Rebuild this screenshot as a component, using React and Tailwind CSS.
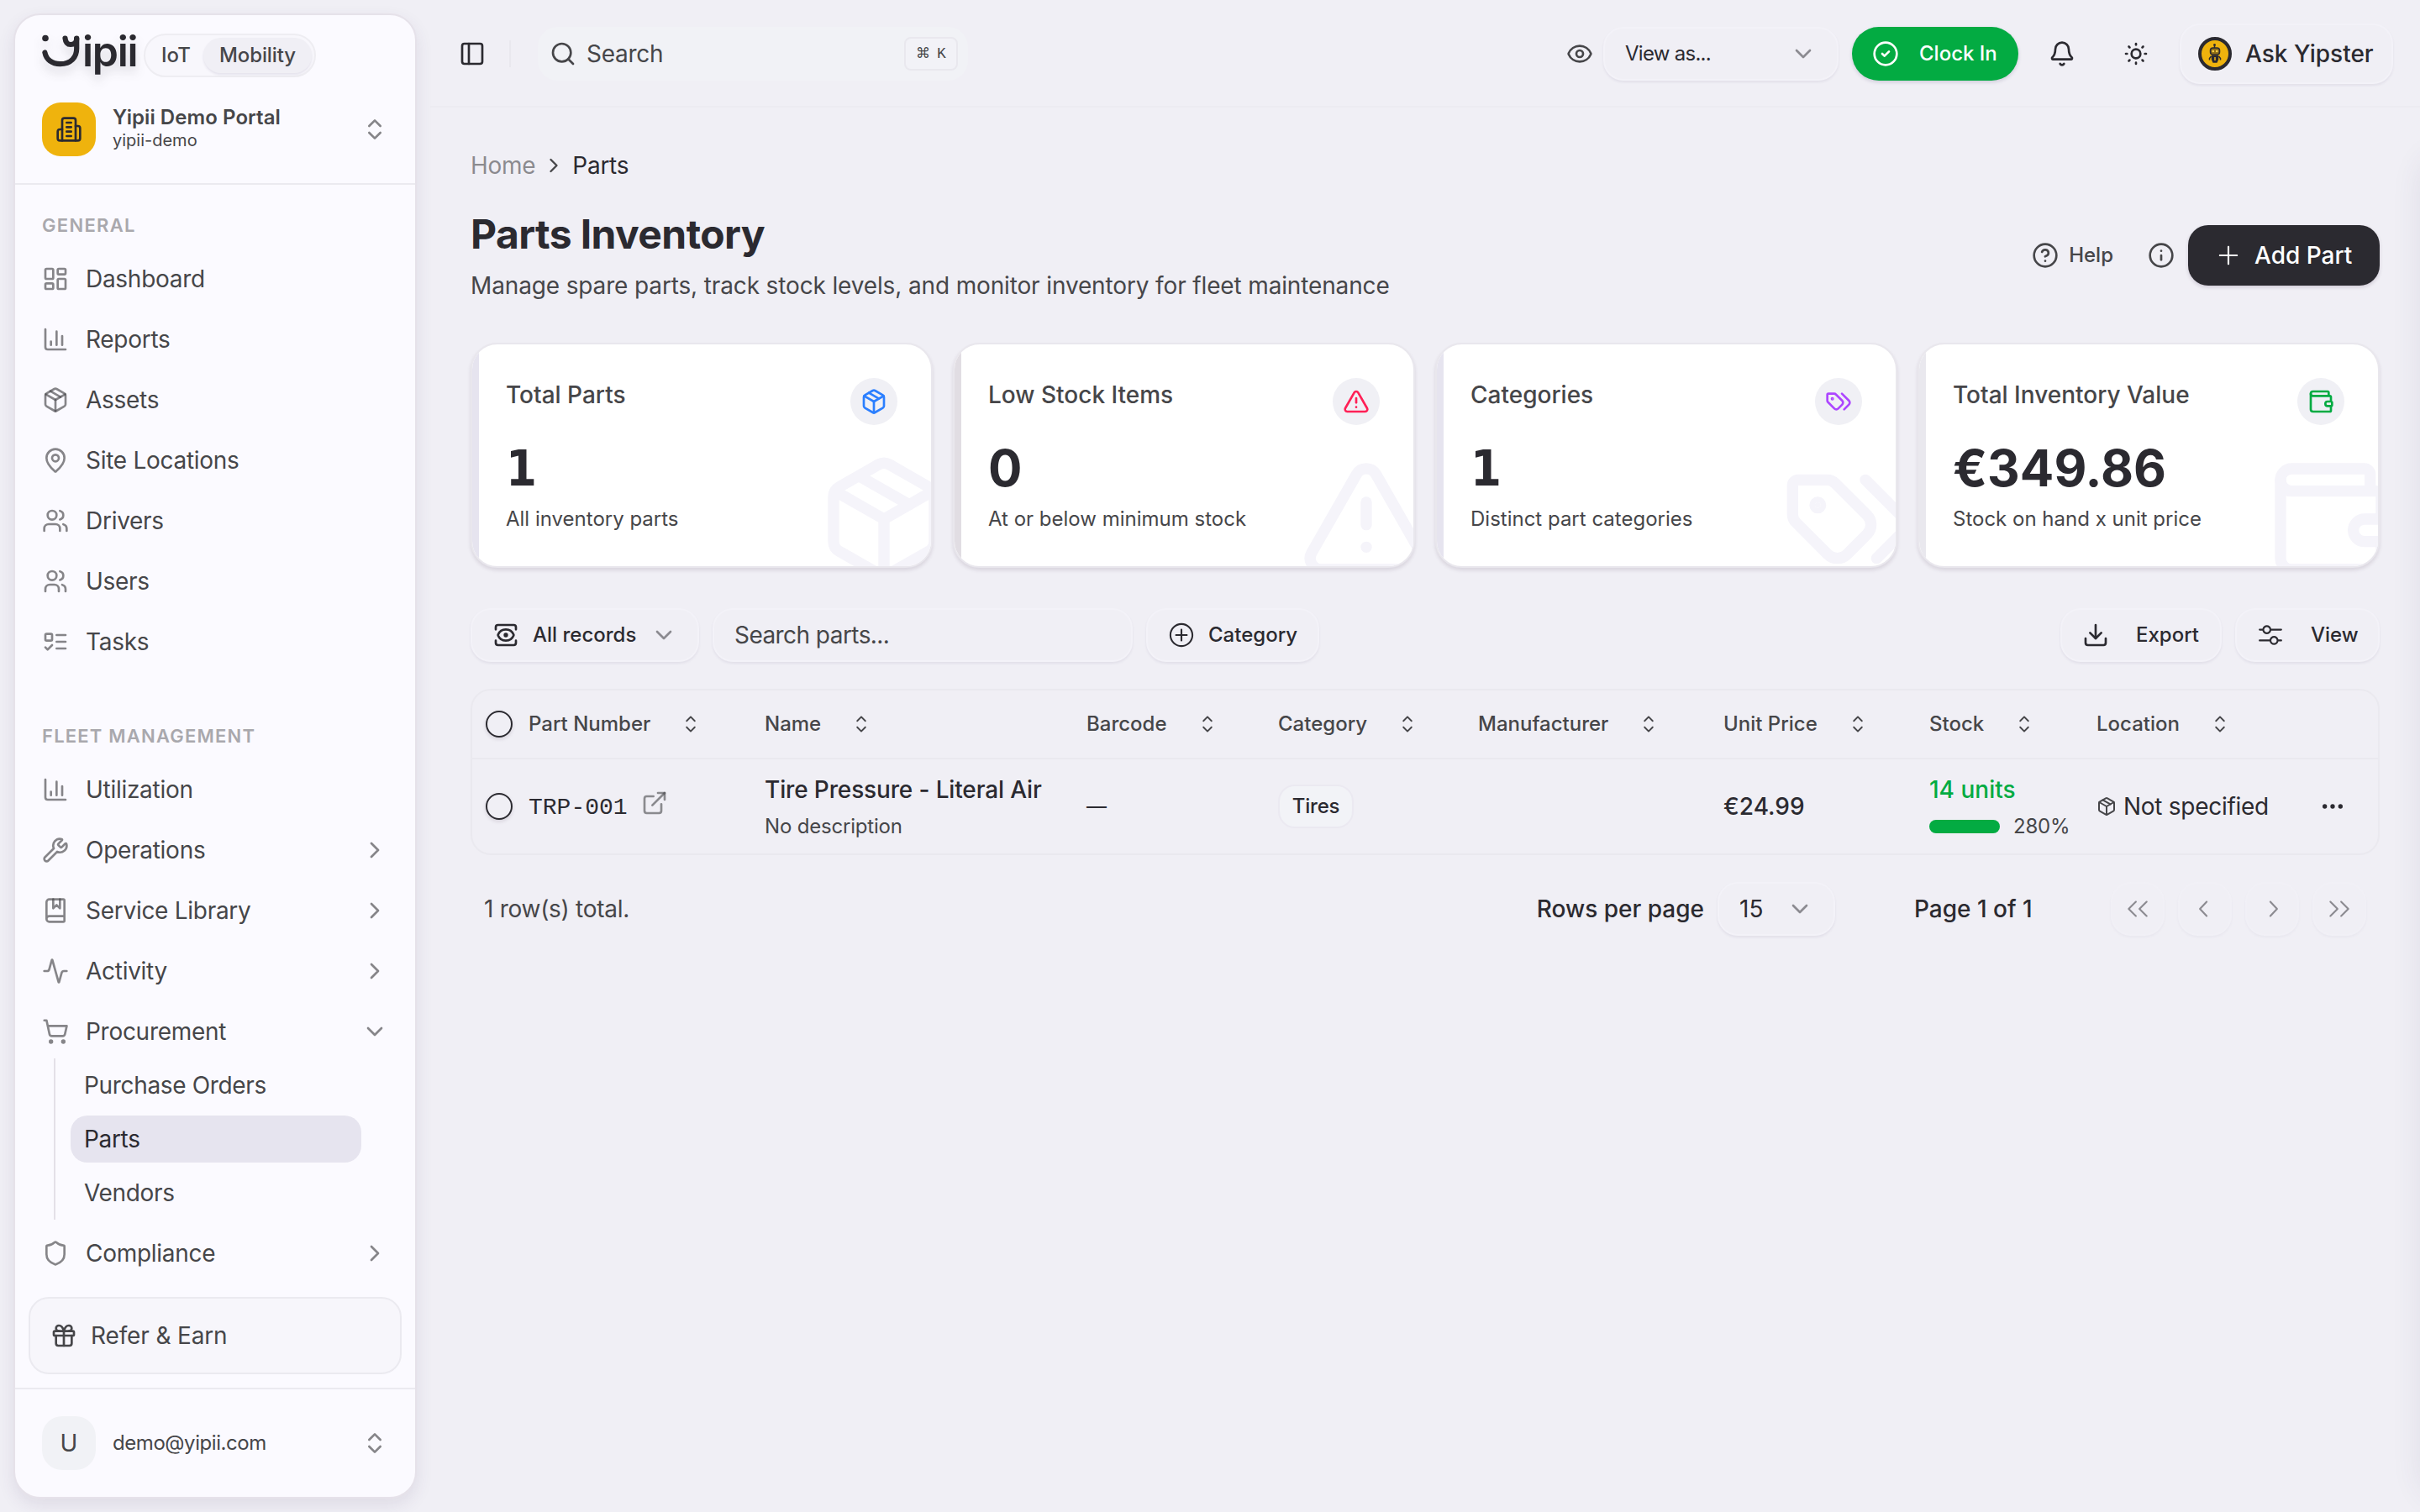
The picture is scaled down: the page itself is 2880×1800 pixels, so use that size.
import React from "react";
import {
  Activity,
  Bell,
  BookMarked,
  ChartColumn,
  ChevronDown,
  ChevronRight,
  ChevronsUpDown,
  CircleCheck,
  CircleQuestionMark,
  Download,
  Ellipsis,
  ExternalLink,
  Eye,
  Gift,
  Info,
  LayoutDashboard,
  MapPin,
  Package,
  PanelLeft,
  Search,
  Shield,
  ShoppingCart,
  SunMedium,
  TriangleAlert,
  Users,
  View,
  Wallet,
  Wrench,
} from "lucide-react";
import {
  RxCaretSort,
  RxChevronLeft,
  RxChevronRight,
  RxDoubleArrowLeft,
  RxDoubleArrowRight,
  RxMixerHorizontal,
  RxPlus,
  RxPlusCircled,
} from "react-icons/rx";

function Svg({ className, children }) {
  return (
    <svg
      viewBox="0 0 24 24"
      fill="none"
      stroke="currentColor"
      strokeWidth="2"
      strokeLinecap="round"
      strokeLinejoin="round"
      className={className}
    >
      {children}
    </svg>
  );
}

function TeamIcon({ className }) {
  return (
    <Svg className={className}>
      <circle cx="9" cy="7" r="4" />
      <path d="M3 21v-2a4 4 0 0 1 4-4h4a4 4 0 0 1 4 4v2" />
      <path d="M16 3.13a4 4 0 0 1 0 7.75" />
      <path d="M21 21v-2a4 4 0 0 0-3-3.85" />
    </Svg>
  );
}

function TodoIcon({ className }) {
  return (
    <Svg className={className}>
      <rect x="3" y="5" width="6" height="6" rx="1" />
      <path d="m3 17 2 2 4-4" />
      <path d="M13 6h8" />
      <path d="M13 12h8" />
      <path d="M13 18h8" />
    </Svg>
  );
}

function TagsIcon({ className }) {
  return (
    <Svg className={className}>
      <path d="m15 5 6.3 6.3a2.4 2.4 0 0 1 0 3.4L17 19" />
      <path d="M9.586 5.586A2 2 0 0 0 8.172 5H3a1 1 0 0 0-1 1v5.172a2 2 0 0 0 .586 1.414L8.29 18.29a2.426 2.426 0 0 0 3.42 0l3.58-3.58a2.426 2.426 0 0 0 0-3.42z" />
      <circle cx="6.5" cy="9.5" r=".5" fill="currentColor" />
    </Svg>
  );
}

function BuildingIcon({ className }) {
  return (
    <Svg className={className}>
      <path d="M6 22V4a2 2 0 0 1 2-2h8a2 2 0 0 1 2 2v18Z" />
      <path d="M6 12H4a2 2 0 0 0-2 2v6a2 2 0 0 0 2 2h2" />
      <path d="M18 9h2a2 2 0 0 1 2 2v9a2 2 0 0 1-2 2h-2" />
      <path d="M10 6h4" />
      <path d="M10 10h4" />
      <path d="M10 14h4" />
      <path d="M10 18h4" />
    </Svg>
  );
}

function Logo() {
  return (
    <div className="flex h-[52px] w-[121px] items-start text-[#2b2a30] drop-shadow-[0_8px_6px_rgba(43,42,48,0.14)]">
      <svg viewBox="0 0 48 52" className="h-[52px] w-12 shrink-0" fill="none" stroke="currentColor" strokeWidth="6.2" strokeLinecap="round">
        <circle cx="4" cy="5.5" r="3.8" fill="currentColor" stroke="none" />
        <path d="M3.4 22.5C5 31 12 36.2 21.5 36.2C34.5 36.2 41.2 28 41.2 18V5.5" />
        <path d="M27.5 5.5C28 10.5 30 13 34 13C38 13 41.2 10.5 41.2 6" />
      </svg>
      <span className="-mt-[9px] text-[50px] leading-[60px] font-semibold tracking-[-0.025em]">ipii</span>
    </div>
  );
}

function YipsterIcon() {
  return (
    <svg viewBox="0 0 40 40" className="size-10">
      <circle cx="20" cy="20" r="18" fill="#efb30d" stroke="#2b2a30" strokeWidth="4" />
      <g fill="none" stroke="#2b2a30" strokeWidth="1.5">
        <path d="M19.5 10v3" />
        <rect x="14.5" y="13" width="11" height="8" rx="3" fill="#8f6d16" />
        <path d="M15.5 23l-2 2.5v2" />
        <path d="M24.5 23l2 2.5v2" />
        <path d="M16.5 22.5h7v4l-1.5 3.5h-4l-1.5-3.5z" fill="#2b2a30" />
      </g>
      <circle cx="19.5" cy="9.5" r="1.4" fill="#2b2a30" />
      <circle cx="17.8" cy="17" r="1.3" fill="#ffd34d" />
      <circle cx="22.2" cy="17" r="1.3" fill="#ffd34d" />
      <path d="M20 24v4" stroke="#efb30d" strokeWidth="1.5" />
    </svg>
  );
}

const general = [
  { label: "Dashboard", icon: LayoutDashboard },
  { label: "Reports", icon: ChartColumn },
  { label: "Assets", icon: Package },
  { label: "Site Locations", icon: MapPin },
  { label: "Drivers", icon: Users },
  { label: "Users", icon: TeamIcon },
  { label: "Tasks", icon: TodoIcon },
];

const fleet = [
  { label: "Utilization", icon: ChartColumn },
  { label: "Operations", icon: Wrench, expandable: true },
  { label: "Service Library", icon: BookMarked, expandable: true },
  { label: "Activity", icon: Activity, expandable: true },
  {
    label: "Procurement",
    icon: ShoppingCart,
    expandable: true,
    children: ["Purchase Orders", "Parts", "Vendors"],
  },
  { label: "Compliance", icon: Shield, expandable: true },
];

const stats = [
  {
    title: "Total Parts",
    value: "1",
    note: "All inventory parts",
    icon: Package,
    color: "text-[#2b7fff]",
    bar: "bg-[#e6e4ef]",
  },
  {
    title: "Low Stock Items",
    value: "0",
    note: "At or below minimum stock",
    icon: TriangleAlert,
    color: "text-[#ff2056]",
    bar: "bg-[#e1dde3]",
  },
  {
    title: "Categories",
    value: "1",
    note: "Distinct part categories",
    icon: TagsIcon,
    color: "text-[#ad46ff]",
    bar: "bg-[#e6e4ef]",
  },
  {
    title: "Total Inventory Value",
    value: "€349.86",
    note: "Stock on hand x unit price",
    icon: Wallet,
    color: "text-[#03ab42]",
    bar: "bg-[#e9e8ee]",
  },
];

const columns = [
  "Part Number",
  "Name",
  "Barcode",
  "Category",
  "Manufacturer",
  "Unit Price",
  "Stock",
  "Location",
];

const tableGrid =
  "grid grid-cols-[51px_281px_383px_228px_238px_292px_245px_199px_1fr] items-center pl-4";

const outline =
  "rounded-3xl border-2 border-[#f3f2f8] bg-[#f0eff5] shadow-[0_2px_3px_rgba(60,50,100,0.08)]";

function NavItem({ item }) {
  const Icon = item.icon;
  return (
    <div className="flex flex-col">
      <div className="flex h-16 items-center pr-8 pl-8">
        <Icon className="size-8 text-[#464649]/65" />
        <span className="ml-5 flex-1 text-[28px] tracking-[-0.01em]">{item.label}</span>
        {item.expandable &&
          (item.children ? (
            <ChevronDown className="size-8 text-[#464649]/65" />
          ) : (
            <ChevronRight className="size-8 text-[#464649]/65" />
          ))}
      </div>
      {item.children && (
        <div className="ml-[46px] flex flex-col gap-2 border-l-2 border-[#e4e0e8] py-1 pl-[18px] text-[28px] tracking-[-0.012em]">
          {item.children.map((child) => (
            <div
              key={child}
              className={
                child === "Parts"
                  ? "flex h-14 w-[346px] items-center rounded-[20px] bg-[#e6e4ef] px-4 text-[#2b2a30]"
                  : "flex h-14 w-[346px] items-center px-4"
              }
            >
              {child}
            </div>
          ))}
        </div>
      )}
    </div>
  );
}

function Sidebar() {
  return (
    <aside className="flex h-[1768px] w-[480px] shrink-0 flex-col rounded-[32px] border-2 border-[#e6e2ea] bg-[#fbfaff] text-[#464649] shadow-[0_8px_20px_rgba(70,50,100,0.1)]">
      <div className="h-[202px] border-b-2 border-[#ebeaf0] px-8 pt-[22px]">
        <div className="flex items-center">
          <Logo />
          <div className="flex h-[52px] w-[205px] items-center rounded-full border-2 border-[#eeedf2] bg-[#f8f7fc] p-[3px] text-2xl font-medium">
            <span className="flex-1 pl-4">IoT</span>
            <span className="flex h-[42px] w-[129px] items-center justify-center rounded-full bg-[#f0eff5] tracking-[-0.005em] shadow-[0_2px_3px_rgba(60,50,100,0.1)]">
              Mobility
            </span>
          </div>
        </div>
        <div className="mt-[30px] flex h-16 items-center">
          <div className="flex size-16 items-center justify-center rounded-[22px] bg-[#efb30d] text-[#2b2a30]">
            <BuildingIcon className="size-8" />
          </div>
          <div className="ml-5 flex flex-1 flex-col pb-[3px]">
            <span className="text-2xl leading-[30px] font-semibold tracking-[0.003em]">Yipii Demo Portal</span>
            <span className="text-xl leading-[25px]">yipii-demo</span>
          </div>
          <ChevronsUpDown className="size-8 text-[#464649]/65" />
        </div>
      </div>

      <nav className="flex flex-1 flex-col pt-8">
        <h4 className="mb-4 h-8 px-8 text-[22px] leading-8 font-semibold tracking-[0.06em] text-[#a9a8ad]">GENERAL</h4>
        <div className="flex flex-col gap-2">
          {general.map((item) => (
            <NavItem key={item.label} item={item} />
          ))}
        </div>
        <h4 className="mt-16 mb-4 h-8 px-8 text-[22px] leading-8 font-semibold tracking-[0.055em] text-[#a9a8ad]">
          FLEET MANAGEMENT
        </h4>
        <div className="flex flex-col gap-2">
          {fleet.map((item) => (
            <NavItem key={item.label} item={item} />
          ))}
        </div>
      </nav>

      <div className="mx-4 mb-4 flex h-[92px] items-center rounded-3xl border-2 border-[#ebeaf0] bg-[#f7f6fb] pl-6">
        <Gift className="size-8" />
        <span className="ml-4 text-[28px] tracking-[-0.005em]">Refer &amp; Earn</span>
      </div>
      <div className="flex h-[130px] items-center border-t-2 border-[#ebeaf0] px-8">
        <div className="flex size-16 items-center justify-center rounded-3xl bg-[#f1f2f6] text-[28px]">U</div>
        <span className="ml-5 flex-1 text-2xl tracking-[-0.018em]">demo@yipii.com</span>
        <ChevronsUpDown className="size-8 text-[#464649]/65" />
      </div>
    </aside>
  );
}

function TopBar() {
  return (
    <header className="flex h-32 items-center border-b-2 border-[#ecebf1] pt-0.5 pr-8 pl-[34px]">
      <PanelLeft className="size-8 text-[#2b2a30]" />
      <div className="ml-7 h-8 w-0.5 bg-[#e9e8ee]" />
      <div className="ml-8 flex h-16 w-[512px] items-center rounded-3xl bg-[#f1f2f6] pr-3 pl-3.5">
        <Search className="size-8 text-[#464649]" />
        <span className="ml-3 flex-1 text-[28px] tracking-[-0.01em] text-[#464649]">Search</span>
        <kbd className="flex h-10 w-16 items-center justify-center gap-2 rounded-lg border-2 border-[#e9e8ee] bg-[#f2f2f7] text-[#464649]">
          <span className="font-['DejaVu_Sans'] text-[17px]">⌘</span>
          <span className="font-['Liberation_Mono'] text-lg">K</span>
        </kbd>
      </div>
      <div className="flex-1" />
      <Eye className="size-8 text-[#464649]" />
      <div className={`ml-3 flex h-16 w-[280px] items-center pr-6 pl-6 text-[#2b2a30] ${outline}`}>
        <span className="flex-1 text-2xl tracking-[-0.03em]">View as...</span>
        <ChevronDown className="size-8 opacity-50" />
      </div>
      <div className="ml-4 flex h-16 w-[198px] items-center rounded-full bg-[#03ab42] pl-6 text-white shadow-[0_2px_4px_rgba(60,50,100,0.18)]">
        <CircleCheck className="size-8" />
        <span className="ml-6 text-2xl font-medium">Clock In</span>
      </div>
      <Bell className="ml-9 size-8 text-[#2b2a30]" />
      <SunMedium className="ml-14 size-8 text-[#2b2a30]" />
      <div className={`ml-9 flex h-[72px] w-[254px] items-center pl-5 text-[#2b2a30] ${outline}`}>
        <YipsterIcon />
        <span className="ml-4 text-[28px] font-medium">Ask Yipster</span>
      </div>
    </header>
  );
}

function StatCard({ stat }) {
  const Icon = stat.icon;
  return (
    <div className="relative flex h-[268px] overflow-hidden rounded-[32px] border-2 border-[#e9e7ed] bg-white shadow-[0_3px_4px_rgba(60,40,70,0.13)]">
      <div className={`w-2 ${stat.bar}`} />
      <Icon className="absolute -right-6 -bottom-6 size-40 text-[#f5f4fa]" />
      <div className="relative flex flex-1 flex-col pr-10 pl-8">
        <div className="mt-10 flex h-14 items-start justify-between">
          <span className="text-[28px] leading-10 font-medium text-[#464649]">{stat.title}</span>
          <div className="flex size-14 items-center justify-center rounded-full bg-[#f0f0f5]">
            <Icon className={`size-8 ${stat.color}`} />
          </div>
        </div>
        <span
          className={
            stat.value === "1"
              ? "mt-[22px] h-[60px] font-['DejaVu_Sans_Condensed','DejaVu_Sans'] text-[59px] leading-[60px] font-bold text-[#2b2a30]"
              : "mt-[22px] h-[60px] text-[60px] leading-[58px] font-bold text-[#2b2a30]"
          }
        >
          {stat.value}
        </span>
        <span className="mt-3.5 text-2xl leading-8 text-[#464649]">{stat.note}</span>
      </div>
    </div>
  );
}

function Toolbar() {
  return (
    <div className="mt-12 flex items-center text-[#2b2a30]">
      <div className={`flex h-16 w-[272px] items-center pl-6 ${outline}`}>
        <View className="size-8" />
        <span className="ml-4 w-[124px] text-2xl font-medium">All records</span>
        <ChevronDown className="ml-4 size-8 opacity-50" />
      </div>
      <div className={`ml-4 flex h-16 w-[500px] items-center pl-6 text-[28px] tracking-[-0.02em] text-[#464649] ${outline}`}>
        Search parts...
      </div>
      <div className={`ml-4 flex h-16 w-[206px] items-center pl-6 ${outline}`}>
        <RxPlusCircled className="size-8" />
        <span className="ml-4 text-2xl font-medium">Category</span>
      </div>
      <div className="flex-1" />
      <div className={`flex h-16 w-[192px] items-center pl-6 ${outline}`}>
        <Download className="size-8" />
        <span className="ml-8 text-2xl font-medium">Export</span>
      </div>
      <div className={`ml-4 flex h-16 w-[172px] items-center pl-6 ${outline}`}>
        <RxMixerHorizontal className="size-8" />
        <span className="ml-8 text-2xl font-medium">View</span>
      </div>
    </div>
  );
}

function Checkbox() {
  return <div className="size-8 rounded-full border-2 border-[#2b2a30] shadow-[0_2px_4px_rgba(60,40,70,0.15)]" />;
}

function PartsTable() {
  return (
    <div className="mt-8 rounded-3xl border-2 border-[#eae9ef]">
      <div className={`h-[82px] border-b-2 border-[#eae9ef] text-2xl font-medium text-[#464649] ${tableGrid}`}>
        <Checkbox />
        {columns.map((name) => (
          <div key={name} className="flex items-center gap-8">
            {name}
            <RxCaretSort className="size-8" />
          </div>
        ))}
      </div>
      <div className={`h-28 text-[28px] text-[#2b2a30] ${tableGrid}`}>
        <Checkbox />
        <div className="flex items-center">
          <span className="pt-1 font-['Liberation_Mono']">TRP-001</span>
          <ExternalLink className="mb-2 ml-4 size-8 text-[#464649]/60" />
        </div>
        <div className="flex flex-col pt-1">
          <span className="leading-10 font-medium tracking-[-0.005em]">Tire Pressure - Literal Air</span>
          <span className="mt-1 text-2xl leading-10 tracking-[-0.008em] text-[#464649]">No description</span>
        </div>
        <span className="text-2xl">—</span>
        <div className="flex">
          <span className="flex h-[52px] w-[90px] items-center justify-center rounded-[20px] border-2 border-[#ebe9f1] bg-[#f2f3f7] text-2xl font-medium tracking-[-0.01em]">
            Tires
          </span>
        </div>
        <span />
        <span className="font-medium">€24.99</span>
        <div className="flex flex-col pt-1">
          <span className="leading-10 font-medium text-[#03ab42]">14 units</span>
          <div className="mt-1 flex h-10 items-center gap-4">
            <div className="h-4 w-[84px] rounded-full bg-[#03ab42]" />
            <span className="text-2xl tracking-[-0.01em] text-[#464649]">280%</span>
          </div>
        </div>
        <div className="flex items-center justify-between pr-[38px]">
          <div className="flex items-center gap-2 whitespace-nowrap">
            <Package className="size-6 text-[#464649]" />
            <span className="tracking-[-0.01em]">Not specified</span>
          </div>
          <Ellipsis className="size-8" />
        </div>
      </div>
    </div>
  );
}

function Pagination() {
  const buttons = [RxDoubleArrowLeft, RxChevronLeft, RxChevronRight, RxDoubleArrowRight];
  return (
    <div className="mt-8 flex h-16 items-center pr-4 pl-4 text-[28px] text-[#2b2a30]">
      <span className="flex-1 tracking-[-0.01em] text-[#464649]">1 row(s) total.</span>
      <span className="mr-4 font-medium">Rows per page</span>
      <div className={`flex h-16 w-[140px] items-center pl-6 ${outline}`}>
        <span className="flex-1">15</span>
        <ChevronDown className="mr-6 size-8 opacity-50" />
      </div>
      <span className="ml-[94px] w-[234px] font-medium">Page 1 of 1</span>
      <div className="flex gap-4">
        {buttons.map((Icon, i) => (
          <div key={i} className={`flex size-16 items-center justify-center opacity-50 ${outline}`}>
            <Icon className="size-8" />
          </div>
        ))}
      </div>
    </div>
  );
}

export default function App() {
  return (
    <div className="relative flex h-[1800px] w-[2880px] overflow-hidden bg-[#f0eff5] pt-4 pl-4 font-['Inter','Open_Sans',sans-serif]">
      <Sidebar />

      <div className="-mt-4 ml-4 flex flex-1 flex-col">
        <TopBar />
        <main className="flex flex-col pr-12 pl-12">
          <div className="mt-[53px] flex h-8 items-center text-[28px] tracking-[-0.01em]">
            <span className="text-[#464649]/60">Home</span>
            <ChevronRight className="mx-2 size-7 text-[#464649]" />
            <span className="text-[#2b2a30]">Parts</span>
          </div>

          <div className="mt-[27px] flex h-32 items-center">
            <div className="flex flex-1 flex-col">
              <h1 className="text-[48px] leading-[72px] font-bold tracking-[-0.0125em] text-[#2b2a30]">Parts Inventory</h1>
              <p className="text-[28px] leading-[50px] tracking-[-0.005em] text-[#464649]">
                Manage spare parts, track stock levels, and monitor inventory for fleet maintenance
              </p>
            </div>
            <div className="flex items-center text-[#464649]">
              <CircleQuestionMark className="size-8" />
              <span className="ml-3 text-2xl font-medium">Help</span>
              <Info className="ml-[41px] size-8" />
              <div className="ml-4 flex h-[72px] w-[228px] items-center rounded-3xl bg-[#2b2a30] pl-8 text-white shadow-[0_2px_4px_rgba(60,40,70,0.18)]">
                <RxPlus className="size-8" />
                <span className="ml-[15px] text-[28px] font-medium">Add Part</span>
              </div>
            </div>
          </div>

          <div className="mt-10 grid grid-cols-4 gap-6">
            {stats.map((stat) => (
              <StatCard key={stat.title} stat={stat} />
            ))}
          </div>

          <Toolbar />
          <PartsTable />
          <Pagination />
        </main>
      </div>

      {/* closed drawer, only its shadow reaches the page */}
      <div className="absolute top-44 left-full h-[1600px] w-96 rounded-[32px] shadow-[0_8px_36px_rgba(70,60,100,0.09)]" />
    </div>
  );
}
